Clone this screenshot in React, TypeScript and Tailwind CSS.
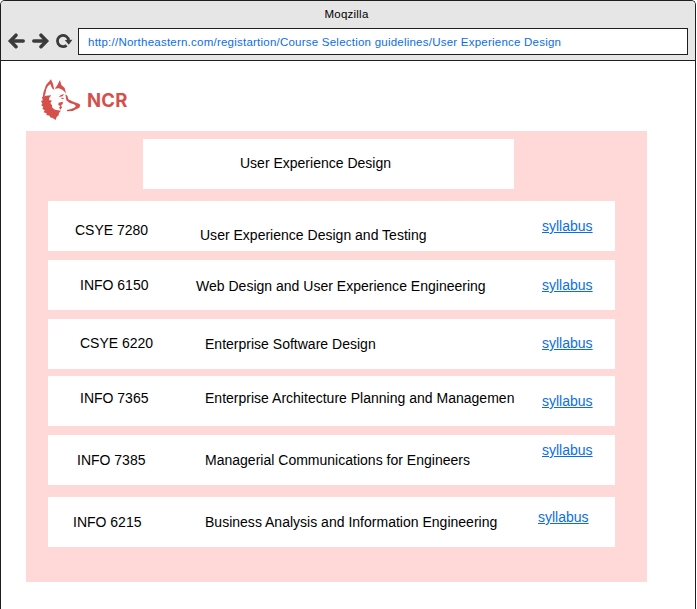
type Course = {
  code: string;
  title: string;
  row: string;
  codeBox: string;
  titleBox: string;
  linkBox: string;
};

const courses: Course[] = [
  { code: 'CSYE 7280', title: 'User Experience Design and Testing', row: 'mt-3', codeBox: 'pl-[27px] pt-[21px]', titleBox: 'pl-3 pt-[26px]', linkBox: 'pl-1 pt-[17px]' },
  { code: 'INFO 6150', title: 'Web Design and User Experience Engineering', row: 'mt-[9px]', codeBox: 'pl-8 pt-[17px]', titleBox: 'pl-2 pt-[18px]', linkBox: 'pl-1 pt-[17px]' },
  { code: 'CSYE 6220', title: 'Enterprise Software Design', row: 'mt-[9px]', codeBox: 'pl-8 pt-4', titleBox: 'pl-[17px] pt-[17px]', linkBox: 'pl-1 pt-4' },
  { code: 'INFO 7365', title: 'Enterprise Architecture Planning and Managemen', row: 'mt-[7px]', codeBox: 'pl-8 pt-[14px]', titleBox: 'pl-[17px] pt-[14px]', linkBox: 'pl-1 pt-[17px]' },
  { code: 'INFO 7385', title: 'Managerial Communications for Engineers', row: 'mt-[9px]', codeBox: 'pl-[29px] pt-[17px]', titleBox: 'pl-[17px] pt-[17px]', linkBox: 'pl-1 pt-[7px]' },
  { code: 'INFO 6215', title: 'Business Analysis and Information Engineering', row: 'mt-3', codeBox: 'pl-[25px] pt-[17px]', titleBox: 'pl-[17px] pt-[17px]', linkBox: 'pt-3' },
];

function ArrowIcon({ flip = false }: { flip?: boolean }) {
  return (
    <svg width="18" height="16" viewBox="0 0 18 16" className={flip ? 'ml-[7px] -scale-x-100' : ''} fill="none" stroke="#3b3b3b" strokeWidth="3.5" strokeLinecap="round" strokeLinejoin="miter">
      <path d="M9 2.2 3.4 7.9 9 13.7" />
      <path d="M4 7.9h12.2" />
    </svg>
  );
}

function ReloadIcon() {
  return (
    <svg width="18" height="16" viewBox="0 0 18 16" fill="none" className="ml-[5px]">
      <path d="M11.6 12.3A5.6 5.6 0 1 1 13.6 7.6" stroke="#3b3b3b" strokeWidth="2.8" />
      <path d="M9.8 7 17.4 6.8 13.8 11.8Z" fill="#3b3b3b" />
    </svg>
  );
}

function HuskyLogo() {
  return (
    <svg width="42" height="44" viewBox="27 24 126 132" fill="#d5504a">
      <path d="M38 84 40 68 48 45 63 28 69 42 73 60 66 55 61 42 54 48 49 57 46 72 43 80Z" />
      <path d="M74 56 81 47 90 30 94 45 104 54 108 70 98 60 87 55Z" />
      <path d="M36 81 48 77 64 76 58 83 57 90 66 92 61 99 66 106 67 113 75 119 84 121 93 122 87 129 86 136 80 141 77 150 68 144 60 142 59 137 49 135 50 130 41 127 44 121 37 116 40 111 34 106 37 100 33 94 38 91Z" />
      <path d="M86 80 93 75 102 72 98 79 91 80ZM91 83 103 84 98 88Z" />
      <path d="M106 73 112 77 115 88 130 95 147 101 151 105 148 113 138 118 128 123 112 124 110 120 121 118 133 113 138 108 132 103 119 99 109 91Z" />
      <path d="M86 98 99 95 98 102 93 106 96 112 92 119 87 113 91 108 85 105Z" />
    </svg>
  );
}

export default function App() {
  return (
    <div className="flex h-[609px] w-[696px] flex-col overflow-hidden rounded-t-[5px] border border-b-0 border-[#1f1f1f] bg-white font-['Liberation_Sans',Arial,sans-serif] text-black">
      <header className="h-[60px] shrink-0 border-b border-[#1f1f1f] bg-[#e6e6e6]">
        <div className="h-[27px] pt-[7px] pr-[3px] text-center text-[11.5px] leading-[13px] tracking-[0.23px]">Moqzilla</div>
        <div className="flex">
          <div className="flex w-[77px] pt-[5px] pl-[6px]">
            <ArrowIcon />
            <ArrowIcon flip />
            <ReloadIcon />
          </div>
          <div className="h-[27px] w-[610px] border border-[#1f1f1f] bg-white pt-[6px] pl-[9px] text-[11.5px] leading-[14px] tracking-[0.23px] whitespace-nowrap text-[#0b6de8]">
            http://Northeastern.com/registartion/Course Selection guidelines/User Experience Design
          </div>
        </div>
      </header>
      <main className="pl-[25px]">
        <div className="flex h-[70px] pt-[17px] pl-[13px]">
          <HuskyLogo />
          <span className="ml-[6px] pt-[9px] font-[Inter] text-[18.5px] leading-[26px] font-bold tracking-[0.2px] text-[#d5504a]">NCR</span>
        </div>
        <section className="h-[451px] w-[621px] bg-[#ffd9d8] pt-2 pl-[22px] text-[14px] leading-4">
          <h1 className="ml-[95px] h-[50px] w-[371px] bg-white pt-4 pl-[97px]">User Experience Design</h1>
          {courses.map((c) => (
            <div key={c.code} className={`flex h-[50px] w-[567px] bg-white whitespace-nowrap ${c.row}`}>
              <span className={`w-[140px] ${c.codeBox}`}>{c.code}</span>
              <span className={`w-[350px] tracking-[0.01px] ${c.titleBox}`}>{c.title}</span>
              <span className={c.linkBox}>
                <a className="text-[#0b6de8] underline" href="#syllabus">syllabus</a>
              </span>
            </div>
          ))}
        </section>
      </main>
    </div>
  );
}
